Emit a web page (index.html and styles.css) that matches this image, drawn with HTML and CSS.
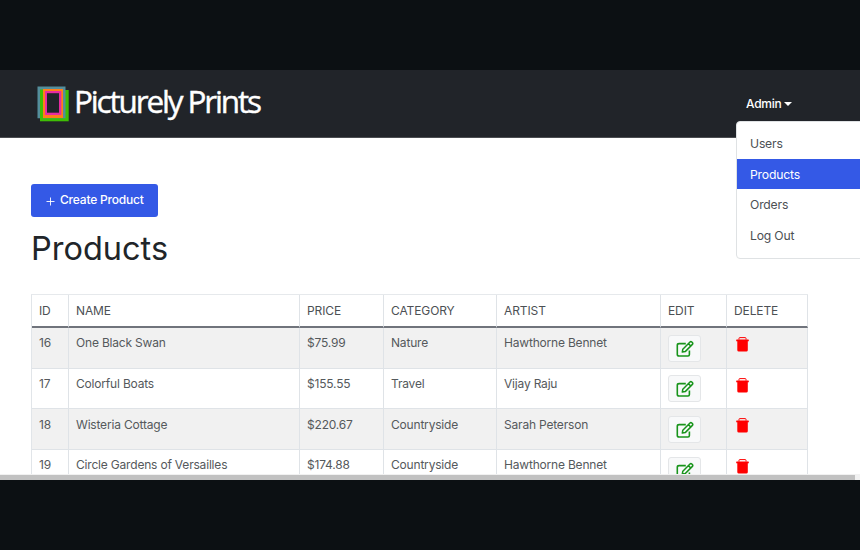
FILE: index.html
```html
<!DOCTYPE html>
<html lang="en">
<head>
<meta charset="utf-8">
<title>Picturely Prints</title>
<link rel="stylesheet" href="styles.css">
</head>
<body>
<svg width="0" height="0" class="defs">
  <symbol id="edit" viewBox="0 0 18 18">
    <path d="M9.8 3.6H3.1Q1.3 3.6 1.3 5.2V14.4Q1.3 16 3.1 16H12Q13.4 16 13.4 14.4V10.5" fill="none" stroke="currentColor" stroke-width="1.6"/>
    <path d="M6.3 12.1L6.8 9.2L14 2Q14.9 1.2 15.8 2L16.4 2.6Q17.2 3.5 16.4 4.4L9.2 11.6ZM12.4 3.6L14.8 6" fill="none" stroke="currentColor" stroke-width="1.5" stroke-linejoin="round"/>
  </symbol>
  <symbol id="trash" viewBox="0 0 13 15">
    <path d="M3 2.6V1.3Q3 .6 3.8 .6H9.2Q10 .6 10 1.3V2.6" fill="none" stroke="currentColor" stroke-width="1"/>
    <path d="M.7 2.6H12.3Q12.8 2.6 12.8 3.1V4.2H11.8V13.3Q11.6 14.6 10.4 14.6H2.7Q1.5 14.6 1.3 13.3V4.2H.2V3.1Q.2 2.6 .7 2.6Z" fill="currentColor"/>
  </symbol>
</svg>
<div class="screen">
  <header class="navbar">
    <a class="brand">
      <svg class="mark" width="32" height="36" viewBox="0 0 32 36">
        <path d="M3 4H31.7V35.3H3Z" fill="#3fbd05"/>
        <path d="M.5 .5H28.5V32.3H.5Z" fill="#548e9b"/>
        <path d="M3 3.5H6V33H3Z" fill="#3fbd05"/>
        <path d="M6 3H26V32H6Z" fill="#ff7f18"/>
        <path d="M8 5H24.3V29H8Z" fill="#e82ba0"/>
        <path d="M10 7.2H22V26.7H10Z" fill="#212429"/>
      </svg>
      <span class="brand-name">Picturely Prints</span>
    </a>
    <div class="account">
      <a class="toggle">Admin<span class="caret"></span></a>
      <nav class="menu">
        <a>Users</a>
        <a class="active">Products</a>
        <a>Orders</a>
        <a>Log Out</a>
      </nav>
    </div>
  </header>
  <main>
    <button class="create"><svg width="9" height="9" viewBox="0 0 9 9"><path d="M4.5 .5V8.5M.5 4.5H8.5" stroke="#fff" stroke-width=".9"/></svg><span>Create Product</span></button>
    <h1>Products</h1>
    <table>
      <colgroup><col class="id"><col class="name"><col class="price"><col class="category"><col class="artist"><col class="edit"><col class="delete"></colgroup>
      <thead><tr><th>ID</th><th>NAME</th><th>PRICE</th><th>CATEGORY</th><th>ARTIST</th><th>EDIT</th><th>DELETE</th></tr></thead>
      <tbody>
        <tr><td>16</td><td>One Black Swan</td><td>$75.99</td><td>Nature</td><td>Hawthorne Bennet</td><td><span class="edit-btn"><svg><use href="#edit"/></svg></span></td><td><svg class="trash"><use href="#trash"/></svg></td></tr>
        <tr><td>17</td><td>Colorful Boats</td><td>$155.55</td><td>Travel</td><td>Vijay Raju</td><td><span class="edit-btn"><svg><use href="#edit"/></svg></span></td><td><svg class="trash"><use href="#trash"/></svg></td></tr>
        <tr><td>18</td><td>Wisteria Cottage</td><td>$220.67</td><td>Countryside</td><td>Sarah Peterson</td><td><span class="edit-btn"><svg><use href="#edit"/></svg></span></td><td><svg class="trash"><use href="#trash"/></svg></td></tr>
        <tr><td>19</td><td>Circle Gardens of Versailles</td><td>$174.88</td><td>Countryside</td><td>Hawthorne Bennet</td><td><span class="edit-btn"><svg><use href="#edit"/></svg></span></td><td><svg class="trash"><use href="#trash"/></svg></td></tr>
      </tbody>
    </table>
  </main>
  <div class="scrollbar"><div class="thumb"></div></div>
</div>
</body>
</html>
```
FILE: styles.css
```css
* { box-sizing: border-box; }
body {
  margin: 0;
  height: 550px;
  padding: 70px 0;
  overflow: hidden;
  background: #0c1013;
  font-family: Inter, "Liberation Sans", sans-serif;
  font-size: 12px;
  letter-spacing: -.19px;
  color: #55595c;
}
.defs { position: absolute; }
.screen {
  height: 410px;
  display: flex;
  flex-direction: column;
  overflow: hidden;
  background: #fff;
}
.navbar {
  flex: none;
  height: 68px;
  padding-left: 37px;
  display: flex;
  justify-content: space-between;
  background: #212429;
  border-bottom: 1px solid #4b4d51;
}
.brand { display: flex; padding-top: 16px; gap: 5px; }
.mark { display: block; }
.brand-name {
  margin-top: -1px;
  font-family: "Open Sans", "Noto Sans", sans-serif;
  font-size: 31.5px;
  line-height: 32px;
  letter-spacing: -2.15px;
  color: #fff;
  white-space: nowrap;
  -webkit-text-stroke: .4px #fff;
}
.account { position: relative; width: 124px; padding: 26px 0 0 10px; }
.toggle {
  display: flex;
  align-items: center;
  gap: 3px;
  line-height: 16px;
  font-weight: 500;
  letter-spacing: -.25px;
  color: #fff;
}
.caret { border: 4px solid transparent; border-top-color: #fff; border-bottom: 0; margin-top: -1px; }
.menu {
  position: absolute;
  left: -.5px;
  top: 51px;
  width: 140px;
  height: 138px;
  padding: 6px 0;
  background: #fff;
  border: 1px solid #dfe2e4;
  border-radius: 4px;
}
.menu a { display: block; height: 30.7px; line-height: 31px; padding-left: 13.5px; font-size: 12.2px; color: #4c5054; }
.menu .active { background: #3459e6; color: #fff; }
main { flex: 1; min-height: 0; overflow: hidden; padding: 46px 0 0 31px; }
.create {
  display: flex;
  align-items: center;
  gap: 5px;
  width: 127px;
  height: 33px;
  padding: 0 0 1px 15px;
  border: 0;
  border-radius: 3px;
  background: #3459e6;
  color: #fff;
  font: 500 12px/16px Inter, sans-serif;
  letter-spacing: -.19px;
  white-space: nowrap;
}
.create svg { margin-top: 3px; }
h1 { margin: 14px 0 27px; font-size: 32.5px; line-height: 36px; font-weight: 400; letter-spacing: 0; color: #212529; }
table { width: 777px; table-layout: fixed; border-collapse: separate; border-spacing: 0; border-top: 1px solid #e6e9ec; border-left: 1px solid #e1e5e9; }
.id { width: 37px; }
.name { width: 231px; }
.price { width: 84px; }
.category { width: 113px; }
.artist { width: 164px; }
.edit { width: 66px; }
.delete { width: 81px; }
th, td { padding: 0 0 0 7px; text-align: left; border-right: 1px solid #dfe3e7; white-space: nowrap; }
th { height: 33px; font-weight: 400; letter-spacing: -.1px; color: #4c5054; border-bottom: 2px solid #70747c; }
td { height: 40.7px; padding-top: 7.4px; vertical-align: top; line-height: 16px; border-bottom: 1px solid #dfe3e7; }
tbody tr:nth-child(odd) { background: #f1f1f1; }
.edit-btn {
  display: flex;
  align-items: center;
  justify-content: center;
  width: 33px;
  height: 27px;
  margin: -.8px 0 0;
  border: 1px solid #e4e6e8;
  border-radius: 3px;
  background: #f8f9fa;
  color: #18941b;
}
.edit-btn svg { width: 18px; height: 18px; margin-top: 1px; }
.trash { display: block; width: 13px; height: 15px; margin: 1.5px 0 0 2px; color: #f00; }
table { width: 776px; }
.scrollbar { flex: none; height: 6px; background: #f1f1f1; padding-top: 1px; }
.thumb { width: 855px; height: 5px; background: #c1c1c1; }
```
